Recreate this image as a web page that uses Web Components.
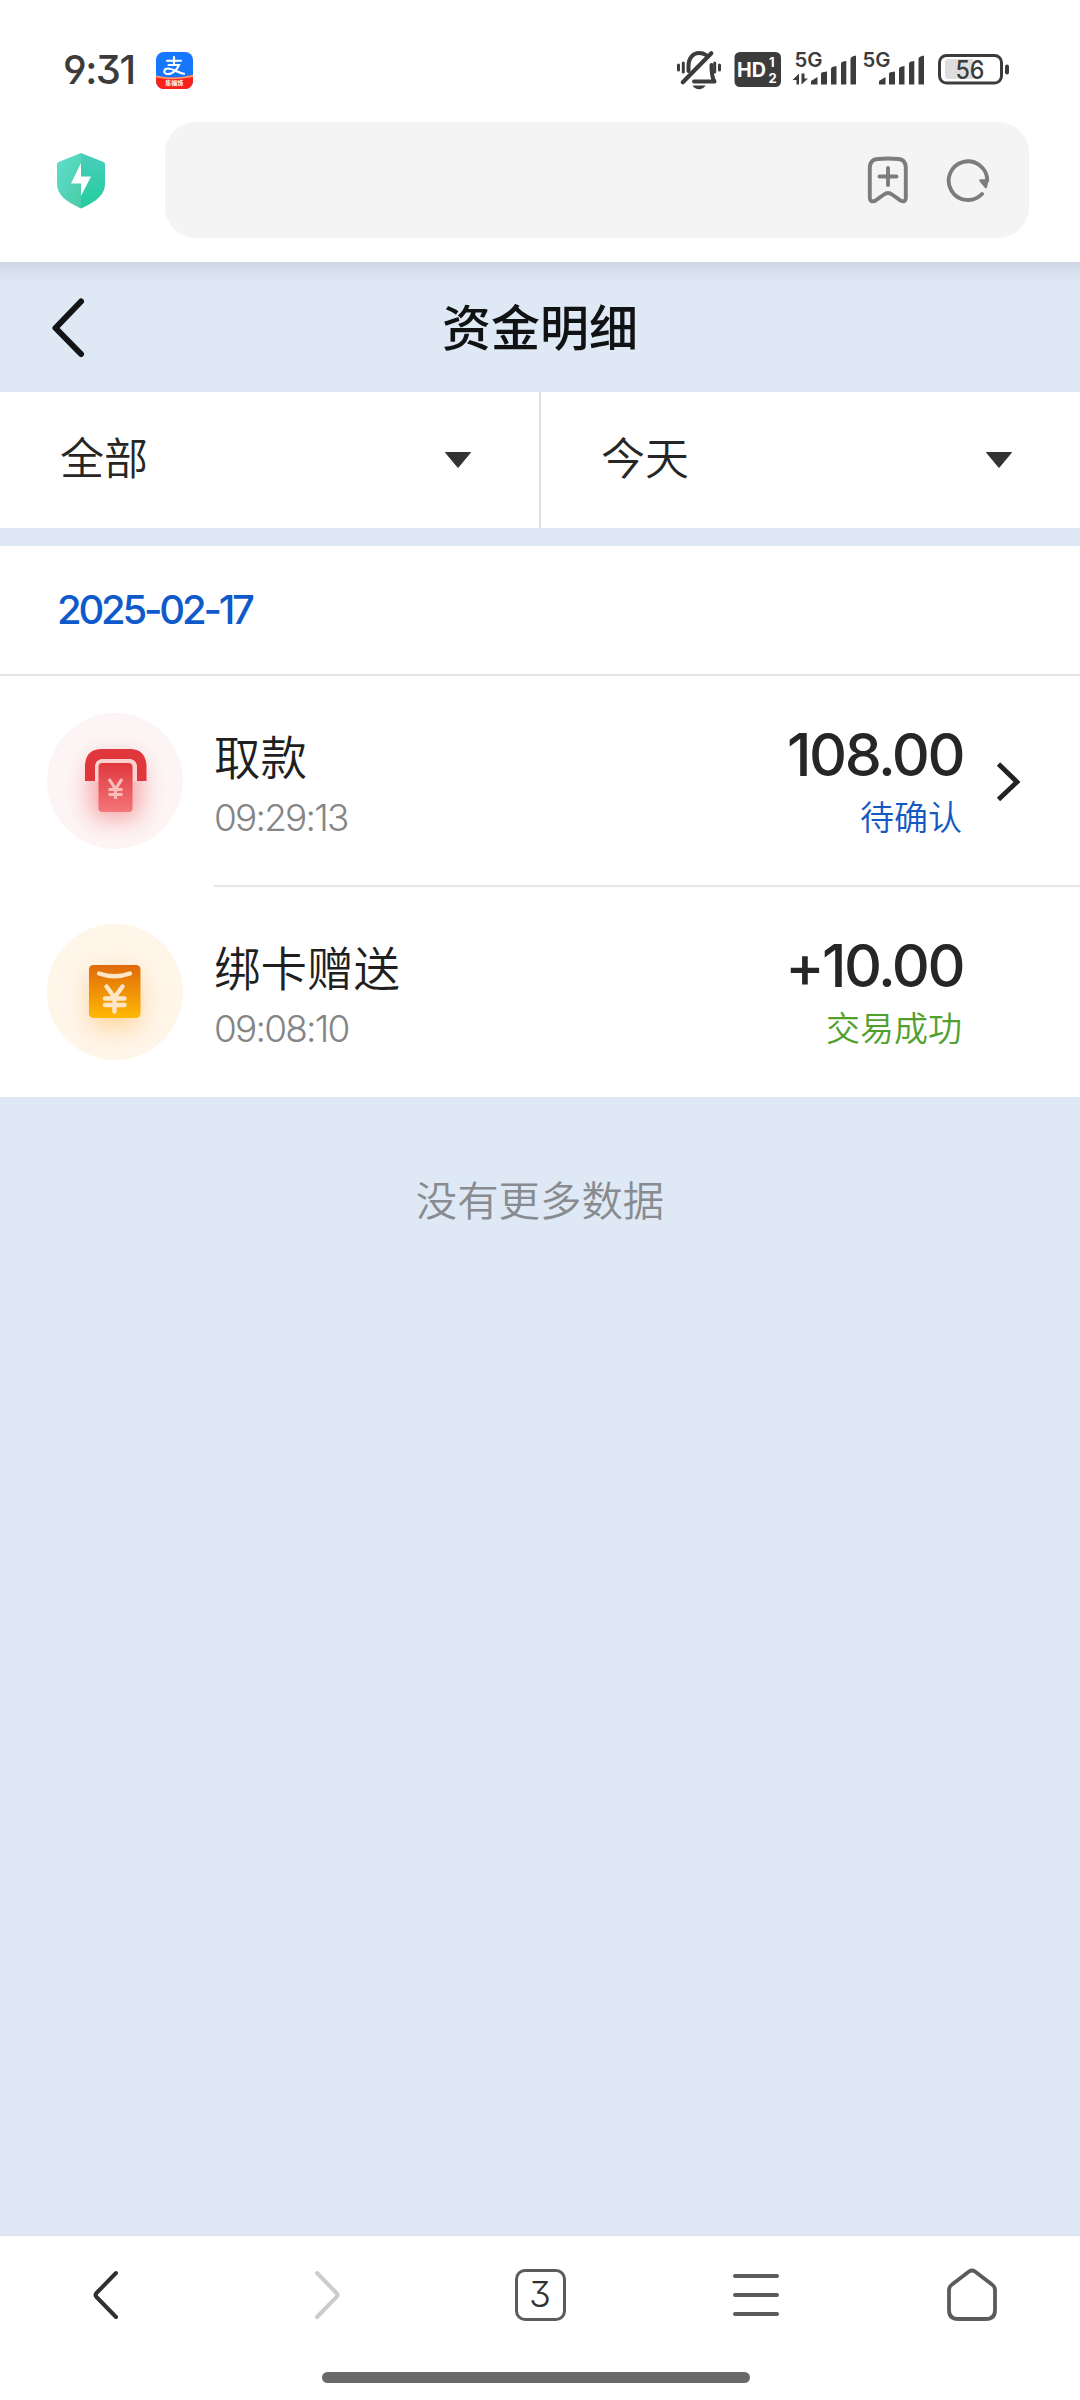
<!DOCTYPE html>
<html lang="zh-CN">
<head>
<meta charset="utf-8">
<title>资金明细</title>
<style>
html,body{margin:0;padding:0}
body{width:1080px;height:2400px;overflow:hidden;background:#fff;
--latin:Inter,"Noto Sans CJK SC",sans-serif;--cjk:"Noto Sans CJK SC",Inter,sans-serif;
font-family:var(--cjk)}
</style>
</head>
<body>
<funds-app></funds-app>
<script>
const define=(name,html,after)=>{
  const t=document.createElement('template');
  customElements.define(name,class extends HTMLElement{
    connectedCallback(){
      if(this.shadowRoot)return;
      t.innerHTML=html;
      this.attachShadow({mode:'open'}).append(t.content.cloneNode(true));
      if(after)after(this,this.shadowRoot);
    }
  });
};

define('status-bar',`<style>
:host{display:flex;height:122px;padding:0 70px 0 63px;box-sizing:border-box;color:#3c3c3c}
.l,.r{display:flex;height:122px}
.time{font:500 40px/50px var(--latin);font-feature-settings:"cv09","ss01";letter-spacing:-1.5px;width:93px;padding-top:45px;white-space:nowrap}
.app{margin-top:52px}
.r{margin-left:auto}
svg{display:block}
svg text{font-family:var(--latin)}
</style>
<div class="l"><div class="time">9:31</div>
<svg class="app" width="37" height="37" viewBox="0 0 37 37"><defs><clipPath id="c"><rect width="37" height="37" rx="8"/></clipPath></defs>
<g clip-path="url(#c)"><rect width="37" height="37" fill="#1677ff"/><path d="M0 24Q18 28 37 23V37H0Z" fill="#fb2018"/><path d="M0 23.6Q18 28 37 22.8V25Q18 29 0 25.5Z" fill="#ff9575"/>
<g fill="none" stroke="#fff" stroke-width="2.100" stroke-linecap="round"><path d="M11 8.800H25M18 5V13M12.500 13H23C21 18 16 22.500 11 22C7 21.500 7.500 16.500 12 16.500C17 16.500 22 21 28 21.800"/></g>
<text x="18.300" y="33" text-anchor="middle" font-size="6" font-weight="700" fill="#fff" style="font-family:var(--cjk)">集福饰</text></g></svg></div>
<div class="r"><svg width="336" height="60" viewBox="674 40 336 60" style="margin-top:40px">
<g fill="none" stroke="#3c3c3c" stroke-width="4" stroke-linecap="round" stroke-linejoin="round">
<path d="M688.500 71V66C688.500 57 694 53 699 53C702 53 704 53.500 706 55M711.500 65C711.500 74 712 78 714.500 81.500H694"/>
<path d="M682.800 82.200L711.300 53.300" stroke-width="4.200"/><path d="M678.500 65V70M683.300 63V72M714.700 63V72M719.500 65V70" stroke-width="3"/></g>
<path d="M692.500 85.500H705.500Q703 89.300 699 89.300Q695 89.300 692.500 85.500Z" fill="#3c3c3c"/>
<rect x="734.500" y="52" width="46.500" height="35" rx="5.500" fill="#3c3c3c"/>
<text x="737" y="77" font-size="20" font-weight="700" fill="#fff" textLength="29" lengthAdjust="spacingAndGlyphs">HD</text>
<text x="769" y="67" font-size="13" font-weight="700" fill="#fff">1</text><text x="768.500" y="83" font-size="13" font-weight="700" fill="#fff">2</text>
<g fill="#3c3c3c"><text x="794.500" y="67" font-size="20" font-weight="600" textLength="28" lengthAdjust="spacingAndGlyphs">5G</text><text x="862.500" y="67" font-size="20" font-weight="600" textLength="28" lengthAdjust="spacingAndGlyphs">5G</text>
<path d="M792.500 80L799 73.500V84.500H796.500V80ZM801.500 73.500V84.500L808 78.500H804.500V73.500Z"/>
<g id="bars"><path d="M811 84.500V81L817.500 77V84.500Z"/><path d="M821 84.500V74Q821 72.500 822.500 72.300L827 71.500V84.500Z"/><path d="M831 84.500V69Q831 67 833 66.800L836.500 66V84.500Z"/><path d="M841 84.500V64Q841 62 843 61.600L846.300 61V84.500Z"/><path d="M850.500 84.500V59Q850.500 57 852.500 56.500L856 55.500V84.500Z"/></g>
<use href="#bars" x="68"/></g>
<rect x="939.500" y="55.500" width="62" height="27.500" rx="7" fill="#fff" stroke="#3c3c3c" stroke-width="3"/>
<path d="M948 59H973V79H948Q945 79 945 76V62Q945 59 948 59Z" fill="#dedede"/><rect x="1005" y="64.500" width="4" height="10" rx="2" fill="#3c3c3c"/>
<text x="955.500" y="78.500" font-size="25" font-weight="500" fill="#3c3c3c" textLength="29" lengthAdjust="spacingAndGlyphs">56</text>
</svg></div>`);

define('url-bar',`<style>
:host{display:flex;height:140px;padding:0 51px 0 57px;box-sizing:border-box}
svg{display:block;flex:none}
.shield{margin-top:31px;margin-right:60px}
.box{flex:1;height:116px;border-radius:31px;background:#f4f4f4;display:flex;justify-content:flex-end;align-items:center;box-sizing:border-box;padding-right:39px;gap:37px}
</style>
<svg class="shield" width="48" height="56" viewBox="0 0 48 56"><defs><linearGradient id="a" x1="0" y1="0" x2="1" y2="1"><stop stop-color="#5edfd0"/><stop offset="1" stop-color="#4bcba4"/></linearGradient><linearGradient id="b" x1="0" y1="0" x2="0" y2="1"><stop stop-color="#49cdbd"/><stop offset="1" stop-color="#22cd9c"/></linearGradient></defs>
<path d="M24 0L1.500 9Q0 9.700 0 11V31C0 43 12 50 24 55.500Z" fill="url(#a)"/><path d="M24 0L46.500 9Q48 9.700 48 11V31C48 43 36 50 24 55.500Z" fill="url(#b)"/><path d="M24 10L14 30.500H24V43L34 23.500H24Z" fill="#fff"/></svg>
<div class="box">
<svg width="42" height="48" viewBox="0 0 42 48" fill="none" stroke="#7c7c7c" stroke-width="3.900" stroke-linecap="round" stroke-linejoin="round"><path d="M10.500 3Q21 2 31.500 3Q38.200 3.500 38.800 11V42Q38.500 46.500 34 44.800L25 38.500Q21 35.500 17 38.500L8 44.800Q3 46.500 2.800 42V11Q3.400 3.500 10.500 3Z"/><path d="M12.500 20.500H29.500M21 12V29"/></svg>
<svg width="44" height="44" viewBox="0 0 44 44" fill="none" stroke="#7c7c7c" stroke-width="3.900" stroke-linecap="round" stroke-linejoin="round"><path d="M36 36A19.300 19.300 0 1 1 41.300 22.500"/><path d="M34.500 22.500H41.200L39.800 29Z" fill="#7c7c7c" stroke-width="2.600"/></svg>
</div>`);

define('nav-header',`<style>
:host{display:grid;grid-template-columns:140px 1fr 140px;height:130px;background:linear-gradient(#cdd5e3 0,#d5dfeb 8px,#dfe9f5 21px);align-items:center}
h1{margin:0 0 5px;text-align:center;font:500 49px/60px var(--cjk);color:#101214}
svg{display:block;margin-left:48px}
</style>
<svg width="40" height="66" viewBox="0 0 40 66"><path d="M33 7.500L7.500 34L33 60" fill="none" stroke="#141414" stroke-width="6" stroke-linecap="round" stroke-linejoin="round"/></svg>
<h1><slot></slot></h1>`);

define('filter-select',`<style>
:host{display:flex;flex:1;align-items:center;justify-content:space-between;padding:0 67px 0 60px;box-sizing:border-box}
span{font:350 44px/60px var(--cjk);color:#262626;margin-bottom:8px}
svg{margin-bottom:1px}
</style><span><slot></slot></span>
<svg width="28" height="18" viewBox="0 0 28 18"><path d="M1.500 1.500H26.500L14 16.500Z" fill="#333" stroke="#333" stroke-linejoin="round"/></svg>`);

define('filter-bar',`<style>
:host{display:flex;height:136px;background:#fff}
::slotted(:first-child){border-right:2px solid #e0e0e0}
</style><slot></slot>`);

define('date-group',`<style>
:host{display:block;background:#fff;margin-top:18px}
.d{height:128px;border-bottom:2px solid #e6e6e6;padding-left:57px;font:500 40px/127px var(--latin);letter-spacing:-3.200px;color:#0f5acb}
</style><div class="d"></div><slot></slot>`,(h,r)=>r.querySelector('.d').textContent=h.getAttribute('date'));

define('record-row',`<style>
:host{display:flex;height:211px;padding-left:47px;box-sizing:border-box}
.ic{width:136px;height:136px;margin:37px 31px 0 0}
.main{flex:1;display:flex;border-bottom:2px solid #e6e6e6;padding-top:49px;box-sizing:border-box}
:host([last]){height:210px}
:host([last]) .main{border-bottom:0}
.t{font:350 46.500px/60px var(--cjk);color:#1f1f1f}
.s{font:300 37px/40px var(--latin);letter-spacing:-1.800px;color:#858585;margin-top:13px}
.right{margin-left:auto;text-align:right;width:280px}
.a{font:500 59px/60px var(--latin);letter-spacing:-2.500px;color:#262626;margin-right:-2px}
.st{font:350 34px/40px var(--cjk);margin-top:11px;margin-right:-1px;color:var(--state)}
.chev{width:119px;padding-left:35px;padding-top:36px;box-sizing:border-box}
:host([last]) .chev svg{display:none}
svg{display:block}
</style>
<div class="ic"><slot name="icon"></slot></div>
<div class="main"><div><div class="t"></div><div class="s"></div></div>
<div class="right"><div class="a"></div><div class="st"></div></div>
<div class="chev"><svg width="26" height="42" viewBox="0 0 26 42"><path d="M2.500 3L21 21L2.500 38.500" fill="none" stroke="#222" stroke-width="4.800"/></svg></div></div>`,
(h,r)=>{for(const [c,k] of [['.t','label'],['.s','time'],['.a','amount'],['.st','state']])r.querySelector(c).textContent=h.getAttribute(k)});

define('withdraw-icon',`<style>:host{display:block}svg{display:block}</style>
<svg width="136" height="136" viewBox="0 0 136 136"><defs><linearGradient id="g" x1="0" y1="0" x2="0" y2="1"><stop stop-color="#e0383c"/><stop offset="1" stop-color="#f4767a"/></linearGradient><filter id="f" x="-80%" y="-80%" width="260%" height="260%"><feGaussianBlur stdDeviation="12"/></filter><clipPath id="k"><circle cx="68" cy="68" r="68"/></clipPath></defs>
<circle cx="68" cy="68" r="68" fill="#fdf5f5"/><g clip-path="url(#k)"><rect x="43" y="46" width="51" height="60" rx="10" fill="#f0555a" opacity=".5" filter="url(#f)"/></g>
<path d="M38 68V52Q39 36 55 36H83Q98 36 99.500 52V68H90V55Q90 46 81 46H57Q48 46 48 55V68Z" fill="#df373b"/>
<path d="M48 68V55Q48 46 57 46H81Q90 46 90 55V68H86V54Q86 50 81 50H57Q52 50 52 54V68Z" fill="#fbd0d0"/>
<rect x="51.500" y="50" width="34" height="49" rx="4" fill="url(#g)"/>
<path d="M62 66L68.500 76L75 66M68.500 76V86M61.500 76.500H75.500M61.500 81.500H75.500" fill="none" stroke="#fbbcbc" stroke-width="3.200"/></svg>`);

define('gift-icon',`<style>:host{display:block}svg{display:block}</style>
<svg width="136" height="136" viewBox="0 0 136 136"><defs><linearGradient id="g" x1="0" y1="0" x2="0" y2="1"><stop stop-color="#df6909"/><stop offset="1" stop-color="#ffb905"/></linearGradient><filter id="f" x="-80%" y="-80%" width="260%" height="260%"><feGaussianBlur stdDeviation="12"/></filter><clipPath id="k"><circle cx="68" cy="68" r="68"/></clipPath></defs>
<circle cx="68" cy="68" r="68" fill="#fff5e9"/><g clip-path="url(#k)"><rect x="44" y="50" width="48" height="53" rx="8" fill="#fba936" opacity=".45" filter="url(#f)"/></g>
<rect x="42" y="41" width="51.500" height="53" rx="4.500" fill="url(#g)"/>
<g fill="none" stroke="#ffe6c8" stroke-width="4.400" stroke-linecap="round" stroke-linejoin="round"><path d="M52 49.500Q67.500 55 83 49.500"/><path d="M59.500 62.500L67.500 73.500L75.500 62.500M67.500 73.500V87.500M58 74.500H77.500M58 81H77.500"/></g></svg>`);

define('bottom-nav',`<style>
:host{display:flex;flex-direction:column;align-items:center;height:165px;background:#fff;border-top:1px solid #dde1e6;box-sizing:border-box}
nav{display:grid;grid-template-columns:repeat(5,216px);justify-items:center;align-items:center;height:117px}
svg{display:block;fill:none;stroke:#5b5b5b;stroke-width:4;stroke-linecap:round;stroke-linejoin:round}
.n{width:51px;height:52px;box-sizing:border-box;border:3.500px solid #5b5b5b;border-radius:10px;font:350 36px/45px var(--latin);font-feature-settings:"ss01";text-align:center;color:#303030}
.h{width:428px;height:11px;border-radius:6px;background:#696969;margin:19px 8px 0 0}
</style>
<nav><svg width="30" height="54" viewBox="0 0 30 54" style="stroke:#303030;margin-right:6px"><path d="M26 5L6.500 25Q4.500 27 6.500 29L26 49"/></svg>
<svg width="30" height="54" viewBox="0 0 30 54" style="stroke:#ccc;margin-left:7px"><path d="M4 5L23.500 25Q25.500 27 23.500 29L4 49"/></svg>
<div class="n">3</div>
<svg width="50" height="54" viewBox="0 0 50 54"><path d="M4 8H46M4 27H46M4 46H46"/></svg>
<svg width="54" height="56" viewBox="0 0 54 56"><path d="M24 4.500Q27 2.500 30 4.500L47 17.500Q50 19.500 50 23V43Q50 52 41 52H13Q4 52 4 43V23Q4 19.500 7 17.500Z" stroke-width="3.800"/></svg></nav>
<div class="h"></div>`);

define('funds-app',`<style>
:host{display:flex;flex-direction:column;width:1080px;height:2400px;background:#fff}
main{flex:1;background:#dfe9f5}
p{margin:0;padding-top:71px;text-align:center;font:350 41.400px/60px var(--cjk);color:#888b8f}
</style>
<status-bar></status-bar><url-bar></url-bar>
<main><nav-header>资金明细</nav-header>
<filter-bar><filter-select>全部</filter-select><filter-select>今天</filter-select></filter-bar>
<date-group date="2025-02-17">
<record-row label="取款" time="09:29:13" amount="108.00" state="待确认" style="--state:#1458c4"><withdraw-icon slot="icon"></withdraw-icon></record-row>
<record-row last label="绑卡赠送" time="09:08:10" amount="+10.00" state="交易成功" style="--state:#52a02c"><gift-icon slot="icon"></gift-icon></record-row>
</date-group>
<p>没有更多数据</p></main>
<bottom-nav></bottom-nav>`);
</script>
</body>
</html>
